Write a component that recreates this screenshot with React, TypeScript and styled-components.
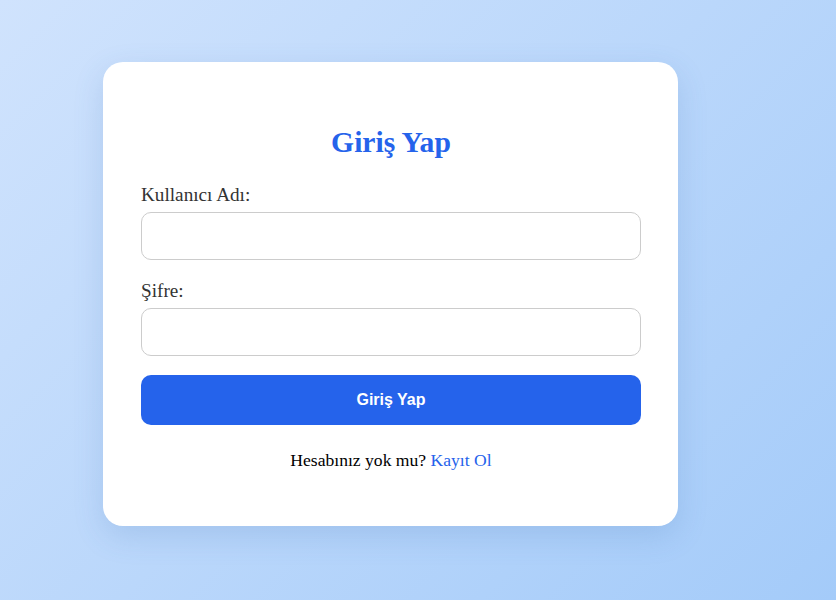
import React from "react";
import styled, { createGlobalStyle } from "styled-components";

const Global = createGlobalStyle`
  html, body { margin: 0; padding: 0; }
  body {
    font-family: "Liberation Serif", "Times New Roman", serif;
    background: linear-gradient(135deg, #d0e3fd 0%, #a4cbf9 100%);
    min-height: 100vh;
  }
`;

const Page = styled.div`
  min-height: 600px;
  box-sizing: border-box;
  padding: 62px 0 0 103px;
`;

const Card = styled.div`
  width: 575px;
  box-sizing: border-box;
  background: #fff;
  border-radius: 20px;
  padding: 40px 37px 39px 38px;
  box-shadow: 0 10px 30px rgba(60, 110, 180, 0.18);
`;

const Title = styled.h2`
  margin: 24px 0 25px;
  text-align: center;
  color: #2563eb;
  font-size: 29.6px;
  font-weight: bold;
  line-height: 33px;
`;

const Field = styled.div<{ $gap: number }>`
  display: flex;
  flex-direction: column;
  margin-bottom: ${(p) => p.$gap}px;
`;

const Label = styled.label`
  font-size: 19.2px;
  line-height: 22px;
  color: #333;
  margin-bottom: 6px;
`;

const Input = styled.input`
  height: 48px;
  box-sizing: border-box;
  border: 1px solid #ccc;
  border-radius: 10px;
  padding: 0 12px;
  font-size: 16px;
  outline: none;
  background: #fff;
`;

const Button = styled.button`
  width: 100%;
  height: 50px;
  border: none;
  border-radius: 10px;
  background: #2563eb;
  color: #fff;
  font-family: "Liberation Sans", Arial, sans-serif;
  font-weight: bold;
  font-size: 16px;
  cursor: pointer;
`;

const Footer = styled.p`
  margin: 25px 0 17px;
  text-align: center;
  font-size: 17.6px;
  line-height: 20px;
  color: #000;
`;

const Link = styled.a`
  color: #2563eb;
  text-decoration: none;
`;

export default function App() {
  return (
    <>
      <Global />
      <Page>
        <Card>
          <Title>Giriş Yap</Title>
          <Field $gap={20}>
            <Label>Kullanıcı Adı:</Label>
            <Input type="text" />
          </Field>
          <Field $gap={19}>
            <Label>Şifre:</Label>
            <Input type="password" />
          </Field>
          <Button>Giriş Yap</Button>
          <Footer>
            Hesabınız yok mu? <Link href="#">Kayıt Ol</Link>
          </Footer>
        </Card>
      </Page>
    </>
  );
}
